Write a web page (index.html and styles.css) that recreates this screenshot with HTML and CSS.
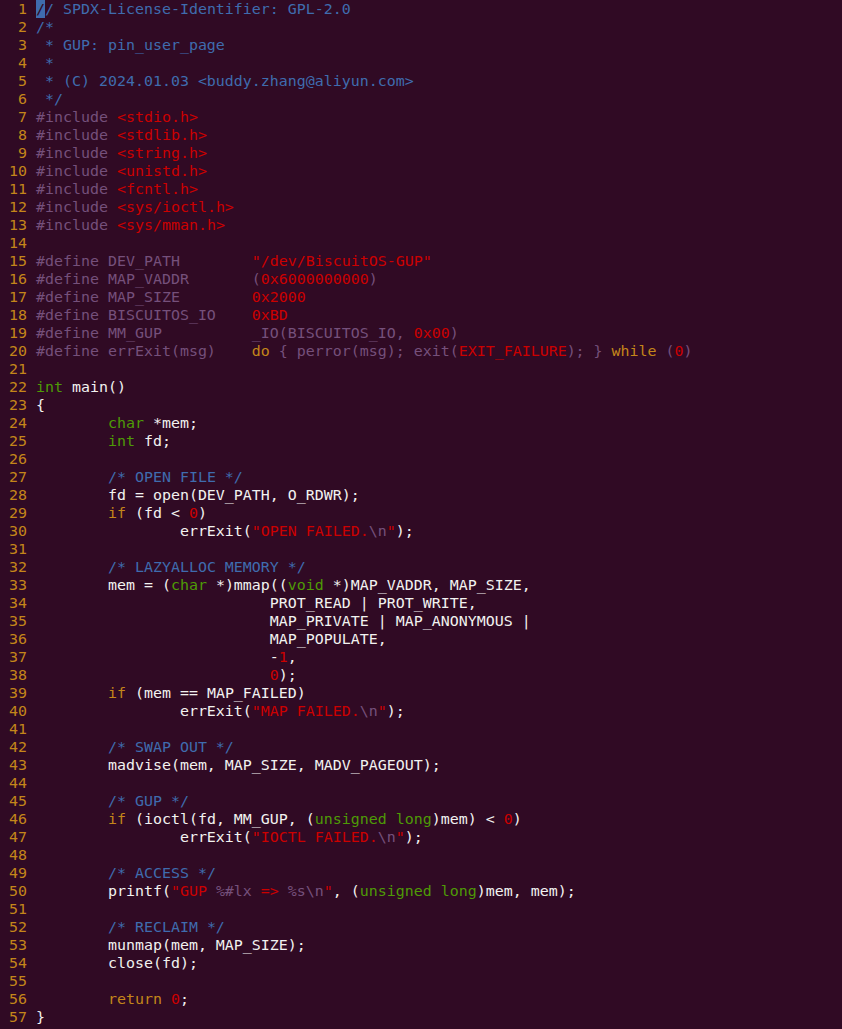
FILE: index.html
```html
<!DOCTYPE html>
<html>
<head>
<meta charset="utf-8">
<link rel="stylesheet" href="styles.css">
</head>
<body>
<div class="ed">
<div class="l"><span class="n">1</span><span class="cm"><span class="cur">/</span>/ SPDX-License-Identifier: GPL-2.0</span></div>
<div class="l"><span class="n">2</span><span class="cm">/*</span></div>
<div class="l"><span class="n">3</span><span class="cm"> * GUP: pin_user_page</span></div>
<div class="l"><span class="n">4</span><span class="cm"> *</span></div>
<div class="l"><span class="n">5</span><span class="cm"> * (C) 2024.01.03 &lt;buddy.zhang@aliyun.com&gt;</span></div>
<div class="l"><span class="n">6</span><span class="cm"> */</span></div>
<div class="l"><span class="n">7</span><span class="pp">#include </span><span class="st">&lt;stdio.h&gt;</span></div>
<div class="l"><span class="n">8</span><span class="pp">#include </span><span class="st">&lt;stdlib.h&gt;</span></div>
<div class="l"><span class="n">9</span><span class="pp">#include </span><span class="st">&lt;string.h&gt;</span></div>
<div class="l"><span class="n">10</span><span class="pp">#include </span><span class="st">&lt;unistd.h&gt;</span></div>
<div class="l"><span class="n">11</span><span class="pp">#include </span><span class="st">&lt;fcntl.h&gt;</span></div>
<div class="l"><span class="n">12</span><span class="pp">#include </span><span class="st">&lt;sys/ioctl.h&gt;</span></div>
<div class="l"><span class="n">13</span><span class="pp">#include </span><span class="st">&lt;sys/mman.h&gt;</span></div>
<div class="l"><span class="n">14</span></div>
<div class="l"><span class="n">15</span><span class="pp">#define DEV_PATH        </span><span class="st">"/dev/BiscuitOS-GUP"</span></div>
<div class="l"><span class="n">16</span><span class="pp">#define MAP_VADDR       (</span><span class="st">0x6000000000</span><span class="pp">)</span></div>
<div class="l"><span class="n">17</span><span class="pp">#define MAP_SIZE        </span><span class="st">0x2000</span></div>
<div class="l"><span class="n">18</span><span class="pp">#define BISCUITOS_IO    </span><span class="st">0xBD</span></div>
<div class="l"><span class="n">19</span><span class="pp">#define MM_GUP          _IO(BISCUITOS_IO, </span><span class="st">0x00</span><span class="pp">)</span></div>
<div class="l"><span class="n">20</span><span class="pp">#define errExit(msg)    </span><span class="kw">do</span><span class="pp"> { perror(msg); exit(</span><span class="st">EXIT_FAILURE</span><span class="pp">); } </span><span class="kw">while</span><span class="pp"> (</span><span class="st">0</span><span class="pp">)</span></div>
<div class="l"><span class="n">21</span></div>
<div class="l"><span class="n">22</span><span class="ty">int</span> main()</div>
<div class="l"><span class="n">23</span>{</div>
<div class="l"><span class="n">24</span>        <span class="ty">char</span> *mem;</div>
<div class="l"><span class="n">25</span>        <span class="ty">int</span> fd;</div>
<div class="l"><span class="n">26</span></div>
<div class="l"><span class="n">27</span>        <span class="cm">/* OPEN FILE */</span></div>
<div class="l"><span class="n">28</span>        fd = open(DEV_PATH, O_RDWR);</div>
<div class="l"><span class="n">29</span>        <span class="kw">if</span> (fd &lt; <span class="st">0</span>)</div>
<div class="l"><span class="n">30</span>                errExit(<span class="st">"OPEN FAILED.</span><span class="pp">\n</span><span class="st">"</span>);</div>
<div class="l"><span class="n">31</span></div>
<div class="l"><span class="n">32</span>        <span class="cm">/* LAZYALLOC MEMORY */</span></div>
<div class="l"><span class="n">33</span>        mem = (<span class="ty">char</span> *)mmap((<span class="ty">void</span> *)MAP_VADDR, MAP_SIZE,</div>
<div class="l"><span class="n">34</span>                          PROT_READ | PROT_WRITE,</div>
<div class="l"><span class="n">35</span>                          MAP_PRIVATE | MAP_ANONYMOUS |</div>
<div class="l"><span class="n">36</span>                          MAP_POPULATE,</div>
<div class="l"><span class="n">37</span>                          -<span class="st">1</span>,</div>
<div class="l"><span class="n">38</span>                          <span class="st">0</span>);</div>
<div class="l"><span class="n">39</span>        <span class="kw">if</span> (mem == MAP_FAILED)</div>
<div class="l"><span class="n">40</span>                errExit(<span class="st">"MAP FAILED.</span><span class="pp">\n</span><span class="st">"</span>);</div>
<div class="l"><span class="n">41</span></div>
<div class="l"><span class="n">42</span>        <span class="cm">/* SWAP OUT */</span></div>
<div class="l"><span class="n">43</span>        madvise(mem, MAP_SIZE, MADV_PAGEOUT);</div>
<div class="l"><span class="n">44</span></div>
<div class="l"><span class="n">45</span>        <span class="cm">/* GUP */</span></div>
<div class="l"><span class="n">46</span>        <span class="kw">if</span> (ioctl(fd, MM_GUP, (<span class="ty">unsigned long</span>)mem) &lt; <span class="st">0</span>)</div>
<div class="l"><span class="n">47</span>                errExit(<span class="st">"IOCTL FAILED.</span><span class="pp">\n</span><span class="st">"</span>);</div>
<div class="l"><span class="n">48</span></div>
<div class="l"><span class="n">49</span>        <span class="cm">/* ACCESS */</span></div>
<div class="l"><span class="n">50</span>        printf(<span class="st">"GUP </span><span class="pp">%#lx</span><span class="st"> =&gt; </span><span class="pp">%s\n</span><span class="st">"</span>, (<span class="ty">unsigned long</span>)mem, mem);</div>
<div class="l"><span class="n">51</span></div>
<div class="l"><span class="n">52</span>        <span class="cm">/* RECLAIM */</span></div>
<div class="l"><span class="n">53</span>        munmap(mem, MAP_SIZE);</div>
<div class="l"><span class="n">54</span>        close(fd);</div>
<div class="l"><span class="n">55</span></div>
<div class="l"><span class="n">56</span>        <span class="kw">return</span> <span class="st">0</span>;</div>
<div class="l"><span class="n">57</span>}</div>
</div>
</body>
</html>
```
FILE: styles.css
```css
html, body {
  margin: 0;
  padding: 0;
  background: #300a24;
}
.ed {
  font-family: "DejaVu Sans Mono", "Liberation Mono", monospace;
  font-size: 14.95px;
  color: #f2f2f0;
}
.l {
  white-space: pre;
  height: 18px;
  line-height: 18px;
}
.n {
  display: inline-block;
  width: 27px;
  margin-right: 9px;
  text-align: right;
  color: #c4861a;
}
.cm { color: #3f6cae; }
.pp { color: #75507b; }
.st { color: #cc0000; }
.ty { color: #4e9a06; }
.kw { color: #c4861a; }
.cur {
  background: #3f6cae;
  color: #300a24;
}
```
